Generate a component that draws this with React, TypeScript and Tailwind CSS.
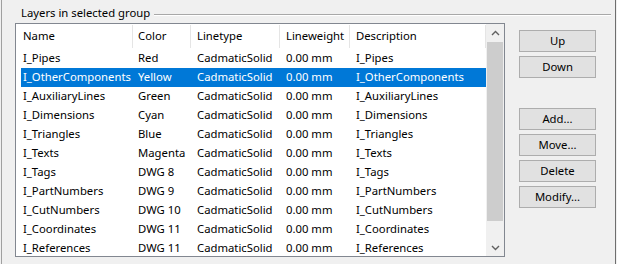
import React from 'react';

const font = { fontFamily: '"Noto Sans", "Open Sans", sans-serif' };

const columns = [
  { title: 'Name', width: 'w-[117px]', pad: 'pl-[7px]' },
  { title: 'Color', width: 'w-[58px]', pad: 'pl-[5px]' },
  { title: 'Linetype', width: 'w-[89px]', pad: 'pl-[6px]' },
  { title: 'Lineweight', width: 'w-[70px]', pad: 'pl-[6px]' },
  { title: 'Description', width: 'w-[136px]', pad: 'pl-[6px]' },
];

const layers = [
  ['I_Pipes', 'Red'],
  ['I_OtherComponents', 'Yellow'],
  ['I_AuxiliaryLines', 'Green'],
  ['I_Dimensions', 'Cyan'],
  ['I_Triangles', 'Blue'],
  ['I_Texts', 'Magenta'],
  ['I_Tags', 'DWG 8'],
  ['I_PartNumbers', 'DWG 9'],
  ['I_CutNumbers', 'DWG 10'],
  ['I_Coordinates', 'DWG 11'],
  ['I_References', 'DWG 11'],
];

const LayerRow: React.FC<{ name: string; color: string; selected?: boolean }> = ({ name, color, selected }) => (
  <div className="flex h-[19px] shrink-0 pl-[5px]">
    <div className={`flex items-center ${selected ? 'bg-[#0078d7] text-white' : 'text-black'}`}>
      <div className="w-[112px] pl-[2px] whitespace-nowrap">{name}</div>
      <div className="w-[58px] pl-[5px] whitespace-nowrap">{color}</div>
      <div className="w-[89px] pl-[6px] whitespace-nowrap">CadmaticSolid</div>
      <div className="w-[70px] pl-[6px] whitespace-nowrap">0.00 mm</div>
      <div className="w-[136px] pl-[6px] whitespace-nowrap">{name}</div>
    </div>
  </div>
);

const WinButton: React.FC<{ label: string; className?: string }> = ({ label, className = '' }) => (
  <button
    className={`w-[77px] h-[22px] border border-[#adadad] bg-[#e1e1e1] text-black flex items-center justify-center leading-none ${className}`}
  >
    {label}
  </button>
);

const Chevron: React.FC<{ down?: boolean }> = ({ down }) => (
  <svg width="9" height="6" viewBox="0 0 9 6">
    <polyline
      points={down ? '1,1 4.5,4.5 8,1' : '1,5 4.5,1.5 8,5'}
      fill="none"
      stroke="#606060"
      strokeWidth="1.4"
    />
  </svg>
);

export default function App() {
  return (
    <div
      className="w-[617px] h-[264px] bg-[#f0f0f0] overflow-hidden flex text-[11.3px]"
      style={font}
    >
      <div className="w-px shrink-0 bg-[#f0f0f0]" />
      <div className="w-px shrink-0 bg-[#a0a0a0]" />
      <div className="flex-1 flex flex-col">
        {/* group box title */}
        <div className="h-[23px] flex shrink-0">
          <span className="pl-[19px] pt-[4px] leading-[18px] whitespace-nowrap text-black">
            Layers in selected group
          </span>
          <div className="flex-1 ml-[4px] mr-[4px] mt-[14px] h-[2px] flex flex-col">
            <div className="h-px bg-[#a8a8a8]" />
            <div className="h-px bg-white" />
          </div>
        </div>

        <div className="flex pl-[13px]">
          {/* list view */}
          <div className="w-[490px] h-[234px] border border-[#828790] bg-white flex">
            <div className="w-[470px] flex flex-col overflow-hidden">
              <div className="h-[25px] flex shrink-0">
                {columns.map((c) => (
                  <div
                    key={c.title}
                    className={`${c.width} ${c.pad} flex items-center border-r border-[#e5e5e5] my-[1px] text-black whitespace-nowrap`}
                  >
                    {c.title}
                  </div>
                ))}
              </div>
              {layers.map(([name, color], i) => (
                <LayerRow key={name} name={name} color={color} selected={i === 1} />
              ))}
            </div>
            {/* vertical scrollbar */}
            <div className="w-[18px] bg-[#f0f0f0] flex flex-col">
              <div className="h-[18px] flex items-center justify-center">
                <Chevron />
              </div>
              <div className="h-[179px] mx-[1px] bg-[#cdcdcd]" />
              <div className="flex-1" />
              <div className="h-[17px] flex items-center justify-center">
                <Chevron down />
              </div>
            </div>
          </div>

          {/* buttons */}
          <div className="ml-[14px] pt-[7px] flex flex-col gap-[4px]">
            <WinButton label="Up" />
            <WinButton label="Down" />
            <WinButton label="Add..." className="mt-[26px]" />
            <WinButton label="Move..." />
            <WinButton label="Delete" />
            <WinButton label="Modify..." />
          </div>
        </div>
      </div>
      <div className="w-px shrink-0 bg-[#6e6e6e]" />
      <div className="w-px shrink-0 bg-[#f0f0f0]" />
    </div>
  );
}
